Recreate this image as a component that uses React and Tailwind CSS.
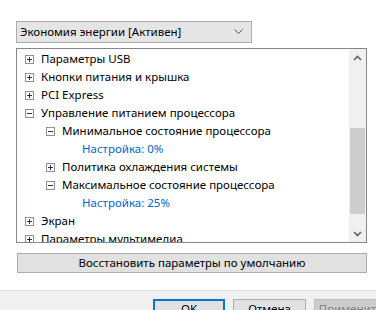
import React from "react";

const rows = [
  { level: 0, icon: "plus", text: "Параметры USB" },
  { level: 0, icon: "plus", text: "Кнопки питания и крышка" },
  { level: 0, icon: "plus", text: "PCI Express" },
  { level: 0, icon: "minus", text: "Управление питанием процессора" },
  { level: 1, icon: "minus", text: "Минимальное состояние процессора" },
  { level: 2, text: "Настройка: 0%", link: true },
  { level: 1, icon: "plus", text: "Политика охлаждения системы" },
  { level: 1, icon: "minus", text: "Максимальное состояние процессора" },
  { level: 2, text: "Настройка: 25%", link: true },
  { level: 0, icon: "plus", text: "Экран" },
  { level: 0, icon: "plus", text: "Параметры мультимедиа" },
];

function Expander({ type }) {
  return (
    <svg width="9" height="9" viewBox="0 0 9 9" className="shrink-0">
      <rect x="0.5" y="0.5" width="8" height="8" fill="#fff" stroke="#919191" />
      <line x1="2" y1="4.5" x2="7" y2="4.5" stroke="#333" />
      {type === "plus" && <line x1="4.5" y1="2" x2="4.5" y2="7" stroke="#333" />}
    </svg>
  );
}

function Row({ row }) {
  const pad = row.level === 0 ? "pl-[8px]" : row.level === 1 ? "pl-[29px]" : "pl-[65px]";
  return (
    <div className={`flex items-center h-[18px] whitespace-nowrap ${pad}`}>
      {row.icon && <Expander type={row.icon} />}
      <span className={`${row.icon ? "ml-[7px]" : ""} ${row.link ? "text-[#0066cc]" : "text-black"}`}>
        {row.text}
      </span>
    </div>
  );
}

export default function App() {
  return (
    <div className="w-[376px] h-[310px] overflow-hidden bg-white flex flex-col text-[11.5px] leading-none" style={{ fontFamily: '"Noto Sans", "Open Sans", sans-serif' }}>
      <div className="pt-[21px] pl-[16px] shrink-0">
        <div className="w-[236px] h-[22px] bg-[#e5e5e5] border border-[#adadad] flex items-center justify-between pl-[3px] pr-[8px]">
          <span>Экономия энергии [Активен]</span>
          <svg width="9" height="6" viewBox="0 0 9 6">
            <polyline points="0.5,0.5 4.5,4.5 8.5,0.5" fill="none" stroke="#555" />
          </svg>
        </div>
      </div>

      <div className="ml-[16px] mt-[5px] w-[351px] h-[195px] shrink-0 border border-[#828790] flex">
        <div className="flex-1 overflow-hidden pt-[1px]">
          {rows.map((r, i) => (
            <Row key={i} row={r} />
          ))}
        </div>
        <div className="w-[17px] bg-[#f0f0f0] flex flex-col">
          <div className="h-[17px] flex items-center justify-center">
            <svg width="9" height="6" viewBox="0 0 9 6">
              <polyline points="1,5 4.5,1.5 8,5" fill="none" stroke="#606060" strokeWidth="1.6" />
            </svg>
          </div>
          <div className="flex-1 flex flex-col">
            <div className="h-[62px]" />
            <div className="h-[86px] mx-[1px] bg-[#cdcdcd]" />
            <div className="flex-1" />
          </div>
          <div className="h-[17px] flex items-center justify-center">
            <svg width="9" height="6" viewBox="0 0 9 6">
              <polyline points="1,1 4.5,4.5 8,1" fill="none" stroke="#606060" strokeWidth="1.6" />
            </svg>
          </div>
        </div>
      </div>

      <div className="ml-[17px] mt-[10px] w-[350px] h-[20px] shrink-0 bg-[#e1e1e1] border border-[#adadad] flex items-center justify-center">
        Восстановить параметры по умолчанию
      </div>

      <div className="mt-[17px] h-[40px] shrink-0 bg-[#f0f0f0] border-t border-[#dfdfdf] flex items-start pt-[8px] pl-[153px] gap-[8px]">
        <div className="w-[72px] h-[23px] shrink-0 bg-[#e1e1e1] border-2 border-[#0078d7] flex items-center justify-center pb-[4px]">OK</div>
        <div className="w-[73px] h-[23px] shrink-0 bg-[#e1e1e1] border border-[#adadad] flex items-center justify-center pb-[4px]">Отмена</div>
        <div className="w-[73px] h-[23px] shrink-0 bg-[#cccccc] border border-[#bfbfbf] text-[#838383] flex items-center justify-center pb-[4px]">Применить</div>
      </div>
    </div>
  );
}
